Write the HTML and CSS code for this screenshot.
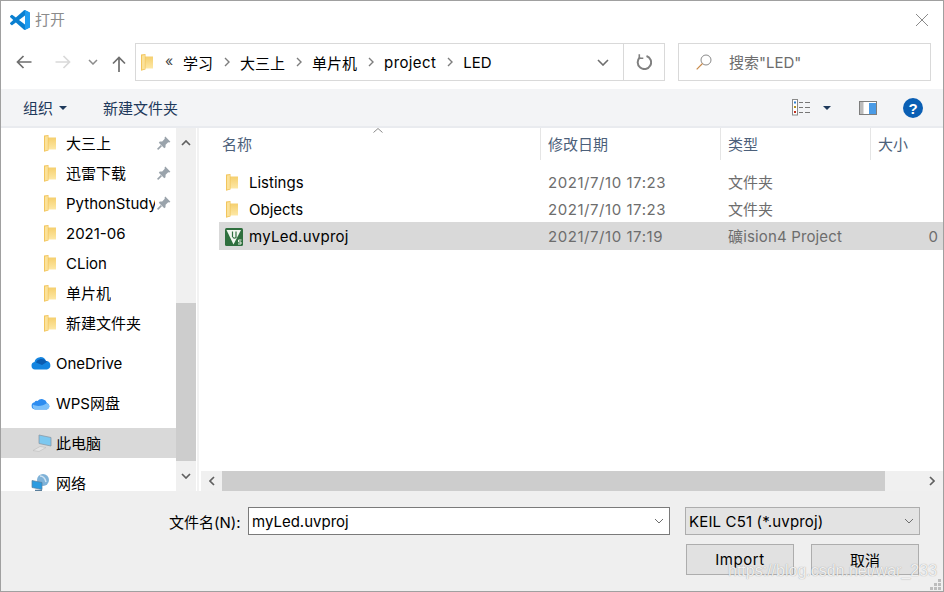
FILE: index.html
```html
<!DOCTYPE html>
<html lang="zh">
<head>
<meta charset="utf-8">
<title>打开</title>
<link rel="stylesheet" href="styles.css">
</head>
<body>
<svg class="defs" width="0" height="0" aria-hidden="true">
  <defs>
    <linearGradient id="fold" x1="0" y1="0" x2="0" y2="1"><stop offset="0" stop-color="#f5cf6e"/><stop offset="1" stop-color="#fde8a6"/></linearGradient>
    <symbol id="folder" viewBox="0 0 12 17">
      <path d="M3 2.500h9V14.500H3z" fill="url(#fold)"/>
      <path d="M0 .5 4.500 0V15.500L0 16.800z" fill="#f2c55c"/>
      <path d="M1 1.500 3.800 1V15L1 15.600z" fill="#fbe29a"/>
    </symbol>
    <symbol id="pin" viewBox="0 0 14 14">
      <path d="M8.300.6 13.400 5.700 12.300 6.500 11.200 6.200 8.600 8.800 8.500 11.300 7.300 12.200 1.800 6.700 2.800 5.500 5.200 5.400 7.800 2.800 7.500 1.700z" fill="#9aa3ab"/>
      <path d="M4.400 9.600.6 13.400" stroke="#9aa3ab" stroke-width="1.600" fill="none"/>
    </symbol>
  </defs>
</svg>
<div class="window">
  <header class="titlebar">
    <svg class="logo" viewBox="0 0 100 100" width="20" height="20">
      <path d="M96.500 10.800 75.900.9a6.200 6.200 0 0 0-7.100 1.200L29.400 38 12.200 25a4.200 4.200 0 0 0-5.300.2L1.400 30.200a4.200 4.200 0 0 0 0 6.200L16.300 50 1.400 63.600a4.200 4.200 0 0 0 0 6.200l5.500 5a4.200 4.200 0 0 0 5.300.2l17.200-13 39.400 35.900a6.200 6.200 0 0 0 7.100 1.200l20.600-9.900a6.200 6.200 0 0 0 3.500-5.600V16.400a6.200 6.200 0 0 0-3.500-5.600zM75 72.700 45.100 50 75 27.300z" fill="#0a7fd0"/>
      <path d="M68.800 2.100a6.200 6.200 0 0 1 7.100-1.200l20.600 9.900a6.200 6.200 0 0 1 3.500 5.600v67.200a6.200 6.200 0 0 1-3.500 5.600l-20.600 9.900a6.200 6.200 0 0 1-7.100-1.200C72 99 75 97 75 93V7c0-4-3-6-6.200-4.900z" fill="#1f9cf0"/>
    </svg>
    <span class="title-text">打开</span>
    <svg class="close" viewBox="0 0 12 12" width="12" height="12"><path d="M0 0 12 12M12 0 0 12" stroke="#8a8a8a" stroke-width="1" fill="none"/></svg>
  </header>

  <nav class="navbar">
    <div class="nav-btns">
      <svg viewBox="0 0 16 14" width="16" height="14"><path d="M15.500 7H1.500M7.500 1 1.500 7l6 6" stroke="#6e6e6e" stroke-width="1.700" fill="none"/></svg>
      <svg class="fwd" viewBox="0 0 16 14" width="16" height="14"><path d="M.5 7h14M8.500 1l6 6-6 6" stroke="#d9d9d9" stroke-width="1.700" fill="none"/></svg>
      <svg class="drop" viewBox="0 0 10 6" width="10" height="6"><path d="M1 1 5 5 9 1" stroke="#8c8c8c" stroke-width="1.500" fill="none"/></svg>
      <svg class="up" viewBox="0 0 14 16" width="14" height="16"><path d="M7 16V1.500M1 7.500l6-6 6 6" stroke="#6e6e6e" stroke-width="1.700" fill="none"/></svg>
    </div>
    <div class="address">
      <svg class="addr-folder"><use href="#folder"/></svg>
      <span class="more">«</span>
      <span class="crumb">学习</span><svg class="sep" viewBox="0 0 6 10" width="6" height="10"><path d="M1 1 5 5 1 9" stroke="#7d7d7d" stroke-width="1.400" fill="none"/></svg>
      <span class="crumb">大三上</span><svg class="sep" viewBox="0 0 6 10" width="6" height="10"><path d="M1 1 5 5 1 9" stroke="#7d7d7d" stroke-width="1.400" fill="none"/></svg>
      <span class="crumb">单片机</span><svg class="sep" viewBox="0 0 6 10" width="6" height="10"><path d="M1 1 5 5 1 9" stroke="#7d7d7d" stroke-width="1.400" fill="none"/></svg>
      <span class="crumb wide">project</span><svg class="sep" viewBox="0 0 6 10" width="6" height="10"><path d="M1 1 5 5 1 9" stroke="#7d7d7d" stroke-width="1.400" fill="none"/></svg>
      <span class="crumb">LED</span>
      <span class="addr-end">
        <svg class="addr-drop" viewBox="0 0 12 7" width="12" height="7"><path d="M1 1 6 6 11 1" stroke="#6e6e6e" stroke-width="1.600" fill="none"/></svg>
        <span class="refresh"><svg viewBox="0 0 16 16" width="16" height="16"><path d="M4 3.300A6.700 6.700 0 1 0 10.500 2" stroke="#808080" stroke-width="2" fill="none"/><path d="M3.300 .3V4.300H7.300" stroke="#808080" stroke-width="1.600" fill="none"/></svg></span>
      </span>
    </div>
    <div class="search">
      <svg viewBox="0 0 16 16" width="16" height="16"><circle cx="10" cy="6" r="5" stroke="#8a8a8a" stroke-width="1" fill="none"/><path d="M6.500 9.500 .7 15.300" stroke="#c98a4a" stroke-width="1.200" fill="none"/></svg>
      <span class="search-text">搜索"LED"</span>
    </div>
  </nav>

  <div class="toolbar">
    <span class="tool">组织</span><span class="caret"></span>
    <span class="tool new">新建文件夹</span>
    <span class="tool-right">
      <svg class="view" viewBox="0 0 19 17" width="19" height="17">
        <rect x=".5" y=".5" width="5" height="15.500" fill="#fff" stroke="#8a8a8a"/>
        <rect x="2" y="2.500" width="2" height="2" fill="#2f7fd0"/><rect x="2" y="7" width="2" height="2" fill="#b09020"/><rect x="2" y="12" width="2" height="2" fill="#c03020"/>
        <path d="M7 3.500h4M13 3.500h5M7 8.500h4M13 8.500h5M7 13.500h4M13 13.500h5" stroke="#777" stroke-width="1"/>
      </svg>
      <span class="caret view-caret"></span>
      <svg class="pane" viewBox="0 0 18 14" width="18" height="14">
        <rect x=".5" y=".5" width="17" height="13" fill="#fff" stroke="#7d7d7d"/>
        <rect x="1" y="1" width="3.500" height="12" fill="#bcbcbc"/>
        <rect x="10" y="2" width="7" height="11" fill="#4a9be6"/>
      </svg>
      <svg class="help" viewBox="0 0 20 20" width="20" height="20">
        <circle cx="10" cy="10" r="10" fill="#0a5fb4"/>
        <text x="10" y="15.500" class="help-q">?</text>
      </svg>
    </span>
  </div>

  <main class="main">
    <aside class="sidebar">
      <div class="tree">
        <div class="group">
          <div class="node sub"><svg class="ico-folder"><use href="#folder"/></svg><span class="label">大三上</span><svg class="pin"><use href="#pin"/></svg></div>
          <div class="node sub"><svg class="ico-folder"><use href="#folder"/></svg><span class="label">迅雷下载</span><svg class="pin"><use href="#pin"/></svg></div>
          <div class="node sub"><svg class="ico-folder"><use href="#folder"/></svg><span class="label latin">PythonStudy</span><svg class="pin"><use href="#pin"/></svg></div>
          <div class="node sub"><svg class="ico-folder"><use href="#folder"/></svg><span class="label latin">2021-06</span></div>
          <div class="node sub"><svg class="ico-folder"><use href="#folder"/></svg><span class="label latin">CLion</span></div>
          <div class="node sub"><svg class="ico-folder"><use href="#folder"/></svg><span class="label">单片机</span></div>
          <div class="node sub"><svg class="ico-folder"><use href="#folder"/></svg><span class="label">新建文件夹</span></div>
        </div>
        <div class="group">
          <div class="node top">
            <svg class="ico-top" viewBox="0 0 20 14" width="20" height="14"><path d="M4 13.500A3.800 3.800 0 0 1 3.500 6 6 6 0 0 1 15 5a4.300 4.300 0 0 1 1 8.500z" fill="#1485e0"/><path d="M5 6.400A6 6 0 0 1 15 5a4 4 0 0 1 1.500.5L11 9z" fill="#0a5cb0"/></svg>
            <span class="label latin">OneDrive</span>
          </div>
        </div>
        <div class="group">
          <div class="node top">
            <svg class="ico-top" viewBox="0 0 20 14" width="20" height="14"><path d="M4 13.500A3.700 3.700 0 0 1 3.500 6.200 2.500 2.500 0 0 1 6.500 5 5.500 5.500 0 0 1 16 7a3.400 3.400 0 0 1 0 6.500z" fill="#2d8cf0"/><path d="M4 13.500A3.700 3.700 0 0 1 2 8.500C6 11 12 10 16 7a3.400 3.400 0 0 1 0 6.500z" fill="#7cc0fa"/></svg>
            <span class="label">WPS网盘</span>
          </div>
        </div>
        <div class="group">
          <div class="node top selected">
            <svg class="ico-top" viewBox="0 0 22 18" width="22" height="18"><path d="M8 1 20 3.500V12L8 9.500z" fill="#7cc8f0" stroke="#8a9aa8" stroke-width=".8"/><path d="M2 16.500 9 12.500 15 13.500 8 17.500z" fill="#e4e4e4" stroke="#bdbdbd" stroke-width=".6"/></svg>
            <span class="label">此电脑</span>
          </div>
        </div>
        <div class="group">
          <div class="node top">
            <svg class="ico-top net" viewBox="0 0 20 18" width="20" height="18"><circle cx="12" cy="6" r="6" fill="#7fb2d8"/><path d="M9 2c3 0 5 2 6 6" stroke="#cfe3f2" stroke-width="1.500" fill="none"/><path d="M1 6.500 11 8.500V15.500L1 13.500z" fill="#2b9be0" stroke="#5a7f9c" stroke-width=".7"/><path d="M4 16.500h7" stroke="#5a7f9c" stroke-width="1.500"/></svg>
            <span class="label">网络</span>
          </div>
        </div>
      </div>
      <div class="vscroll">
        <div class="vbtn"><svg viewBox="0 0 10 6" width="10" height="6"><path d="M1 5 5 1 9 5" stroke="#606060" stroke-width="1.700" fill="none"/></svg></div>
        <div class="vthumb"></div>
        <div class="vbtn"><svg viewBox="0 0 10 6" width="10" height="6"><path d="M1 1 5 5 9 1" stroke="#606060" stroke-width="1.700" fill="none"/></svg></div>
      </div>
    </aside>
    <section class="content">
      <div class="list">
        <div class="thead">
          <span class="th">名称<svg class="sort" viewBox="0 0 10 5" width="10" height="5"><path d="M.5 4.500 5 .5 9.500 4.500" stroke="#8a8a8a" stroke-width="1" fill="none"/></svg></span>
          <span class="th">修改日期</span>
          <span class="th">类型</span>
          <span class="th">大小</span>
        </div>
        <div class="rows">
          <div class="row"><span class="name"><svg class="file-folder"><use href="#folder"/></svg>Listings</span><span class="meta date">2021/7/10 17:23</span><span class="meta">文件夹</span><span class="meta"></span></div>
          <div class="row"><span class="name"><svg class="file-folder"><use href="#folder"/></svg>Objects</span><span class="meta date">2021/7/10 17:23</span><span class="meta">文件夹</span><span class="meta"></span></div>
          <div class="row picked"><span class="name wide-name">
            <svg class="uv" viewBox="0 0 18 18" width="18" height="18">
              <rect width="18" height="18" rx="1.500" fill="#2f6f3e"/>
              <path d="M1.500 2H16L8.500 16.500z" fill="#f2f7f0"/>
              <path d="M7.500 3.500V9M8 9c0 1.500 3 1.500 3 0M11 3.500V10" stroke="#2f6f3e" stroke-width="1.200" fill="none"/>
              <path d="M16.500 12H13.500V14H16V16H13" stroke="#e8f2e4" stroke-width="1" fill="none"/>
            </svg>myLed.uvproj</span><span class="meta date">2021/7/10 17:19</span><span class="meta type">礦ision4 Project</span><span class="meta size">0</span></div>
        </div>
      </div>
      <div class="hscroll">
        <div class="hbtn"><svg viewBox="0 0 6 10" width="6" height="10"><path d="M5 1 1 5 5 9" stroke="#606060" stroke-width="1.700" fill="none"/></svg></div>
        <div class="hthumb"></div>
        <div class="hbtn end"><svg viewBox="0 0 6 10" width="6" height="10"><path d="M1 1 5 5 1 9" stroke="#606060" stroke-width="1.700" fill="none"/></svg></div>
      </div>
    </section>
  </main>

  <footer class="footer">
    <div class="form-row">
      <label class="fname">文件名(N):</label>
      <div class="input"><span>myLed.uvproj</span><svg viewBox="0 0 10 6" width="10" height="6"><path d="M1 1 5 5 9 1" stroke="#6e6e6e" stroke-width="1" fill="none"/></svg></div>
      <div class="select"><span>KEIL C51 (*.uvproj)</span><svg viewBox="0 0 10 6" width="10" height="6"><path d="M1 1 5 5 9 1" stroke="#6e6e6e" stroke-width="1" fill="none"/></svg></div>
    </div>
    <div class="btn-row">
      <button class="btn import">Import</button>
      <button class="btn">取消</button>
    </div>
    <span class="watermark">https://blog.csdn.net/war_233</span>
    <svg class="grip" viewBox="0 0 11 11" width="11" height="11"><path d="M8 0h3v3H8zM4 4h3v3H4zM8 4h3v3H8zM0 8h3v3H0zM4 8h3v3H4zM8 8h3v3H8z" fill="#bdbdbd"/></svg>
  </footer>
</div>
</body>
</html>
```
FILE: styles.css
```css
* { box-sizing: border-box; }
html, body { margin: 0; padding: 0; }
body {
  width: 944px;
  height: 592px;
  overflow: hidden;
  font-family: Inter, "Noto Sans CJK SC", sans-serif;
  font-size: 15px;
  color: #000;
  background: #fff;
}
.defs { position: absolute; }
.window {
  width: 944px;
  height: 592px;
  border: 1px solid #a0a0a0;
  display: flex;
  flex-direction: column;
  background: #fff;
}

/* title */
.titlebar {
  height: 39px;
  flex: none;
  display: flex;
  align-items: center;
  padding: 0 15px 2px 9px;
}
.logo { flex: none; }
.title-text { margin: -2px 0 0 5px; color: #8b8b8b; font-size: 15px; }
.close { margin-left: auto; }

/* nav */
.navbar {
  height: 49px;
  flex: none;
  display: flex;
  align-items: flex-start;
  padding-top: 3px;
}
.nav-btns {
  width: 134px;
  height: 38px;
  flex: none;
  display: flex;
  align-items: center;
  padding-left: 15px;
}
.fwd { margin-left: 23px; }
.drop { margin-left: 17px; }
.up { margin-left: 14px; margin-top: 3px; }
.address {
  width: 530px;
  height: 38px;
  flex: none;
  border: 1px solid #d9d9d9;
  display: flex;
  align-items: center;
  padding-left: 5px;
  font-size: 15px;
}
.addr-folder { width: 12px; height: 17px; flex: none; }
.more { margin-left: 12px; width: 18px; color: #444; font-size: 14px; line-height: 1; margin-top: -3px; }
.crumb { white-space: nowrap; }
.crumb.wide { letter-spacing: .4px; }
.sep { margin: 0 10px 0 11px; flex: none; }
.addr-end {
  margin-left: auto;
  height: 100%;
  display: flex;
  align-items: center;
}
.addr-drop { margin-right: 14px; }
.refresh {
  width: 41px;
  height: 100%;
  border-left: 1px solid #d9d9d9;
  display: flex;
  align-items: center;
  justify-content: center;
}
.search {
  width: 253px;
  height: 38px;
  margin-left: 13px;
  flex: none;
  border: 1px solid #d9d9d9;
  display: flex;
  align-items: center;
  padding-left: 17px;
  gap: 17px;
  color: #6d6d6d;
}
.search-text { margin-top: -2px; }

/* toolbar */
.toolbar {
  height: 39px;
  flex: none;
  background: #f3f4f6;
  border-bottom: 2px solid #e9ebef;
  display: flex;
  align-items: center;
  padding-left: 22px;
  color: #1e395b;
}
.caret {
  width: 0;
  height: 0;
  margin-left: 6px;
  border-left: 4px solid transparent;
  border-right: 4px solid transparent;
  border-top: 4px solid #1e395b;
}
.new { margin-left: 36px; }
.tool-right {
  margin-left: auto;
  margin-right: 20px;
  display: flex;
  align-items: center;
}
.view-caret { margin-left: 12px; }
.pane { margin-left: 28px; }
.help { margin-left: 26px; }
.help-q { fill: #fff; font: 700 15px "Liberation Sans", sans-serif; text-anchor: middle; }

/* main */
.main {
  flex: 1;
  min-height: 0;
  display: flex;
}
.sidebar {
  width: 195px;
  flex: none;
  display: flex;
}
.tree {
  width: 175px;
  flex: none;
  overflow: hidden;
}
.group { margin-bottom: 10px; }
.node {
  height: 30px;
  display: flex;
  align-items: center;
  white-space: nowrap;
}
.node.sub { padding-left: 43px; position: relative; }
.ico-folder { width: 12px; height: 17px; flex: none; }
.sub .label { margin-left: 10px; max-width: 89px; overflow: hidden; }
.label { margin-top: -1px; }
.label.latin { margin-top: 1px; }
.pin { width: 14px; height: 14px; position: absolute; left: 156px; top: 8px; }
.node.top { padding-left: 30px; }
.ico-top { flex: none; width: 20px; margin-right: 5px; }
.selected { background: #d9d9d9; }
.selected .ico-top { width: 22px; margin-right: 3px; }
.vscroll {
  width: 20px;
  flex: none;
  background: #f0f0f0;
  display: flex;
  flex-direction: column;
}
.vbtn {
  height: 30px;
  flex: none;
  display: flex;
  align-items: center;
  justify-content: center;
}
.vthumb {
  height: 158px;
  margin-top: 145px;
  flex: none;
  background: #cdcdcd;
}

.content {
  flex: 1;
  min-width: 0;
  display: flex;
  flex-direction: column;
  margin-left: 1px;
  border-left: 2px solid #f2f2f2;
}
.list {
  flex: 1;
  min-height: 0;
  padding-left: 20px;
}
.thead, .row {
  display: grid;
  grid-template-columns: 322px 180px 150px 1fr;
}
.thead { height: 32px; color: #4c607a; }
.th {
  border-right: 1px solid #e5e5e5;
  display: flex;
  align-items: center;
  position: relative;
  padding-left: 7px;
  padding-bottom: 2px;
}
.th:first-child { padding-left: 3px; }
.th:last-child { border-right: 0; }
.sort { position: absolute; left: 154px; top: 0; }
.rows { padding-top: 9px; }
.row { height: 27px; align-items: center; }
.row.picked { height: 28px; margin-top: -1px; padding-top: 2px; background: #d9d9d9; }
.name { display: flex; align-items: center; padding-left: 7px; color: #000; line-height: 24px; }
.wide-name { letter-spacing: .25px; }
.meta { color: #6d6d6d; padding-left: 7px; white-space: nowrap; line-height: 24px; }
.date { letter-spacing: .55px; }
.type { letter-spacing: .15px; }
.file-folder { width: 12px; height: 17px; margin-right: 11px; flex: none; }
.uv { margin-right: 6px; margin-left: -1px; flex: none; }
.size { text-align: right; padding-right: 5px; }
.hscroll {
  height: 20px;
  flex: none;
  margin-left: 2px;
  background: #f0f0f0;
  display: flex;
}
.hbtn {
  width: 21px;
  flex: none;
  display: flex;
  align-items: center;
  justify-content: center;
}
.hbtn.end { margin-left: auto; margin-right: 1px; }
.hthumb { width: 663px; flex: none; background: #cdcdcd; }

/* footer */
.footer {
  height: 100px;
  flex: none;
  background: #efefef;
  padding-top: 16px;
  position: relative;
}
.form-row {
  display: flex;
  align-items: center;
  height: 28px;
  padding-left: 168px;
}
.fname { width: 79px; color: #000; white-space: nowrap; }
.input {
  width: 422px;
  height: 28px;
  background: #fff;
  border: 1px solid #7a7a7a;
  display: flex;
  align-items: center;
  justify-content: space-between;
  padding: 0 5px 0 3px;
}
.select {
  width: 235px;
  height: 28px;
  margin-left: 15px;
  background: #e3e3e3;
  border: 1px solid #adadad;
  display: flex;
  align-items: center;
  justify-content: space-between;
  padding: 0 5px 0 3px;
  letter-spacing: .15px;
}
.btn-row {
  display: flex;
  gap: 17px;
  padding-left: 685px;
  margin-top: 9px;
}
.btn {
  width: 108px;
  height: 31px;
  padding: 0;
  background: #e1e1e1;
  border: 1px solid #adadad;
  font: inherit;
  color: #000;
}
.import { letter-spacing: .6px; }
.watermark {
  position: absolute;
  left: 727px;
  top: 71px;
  font: 16px "Liberation Sans", sans-serif;
  color: rgba(255, 255, 255, .85);
  text-shadow: 0 0 1px rgba(120, 120, 120, .8);
  white-space: nowrap;
}
.grip { position: absolute; right: 2px; bottom: 1px; }
```
